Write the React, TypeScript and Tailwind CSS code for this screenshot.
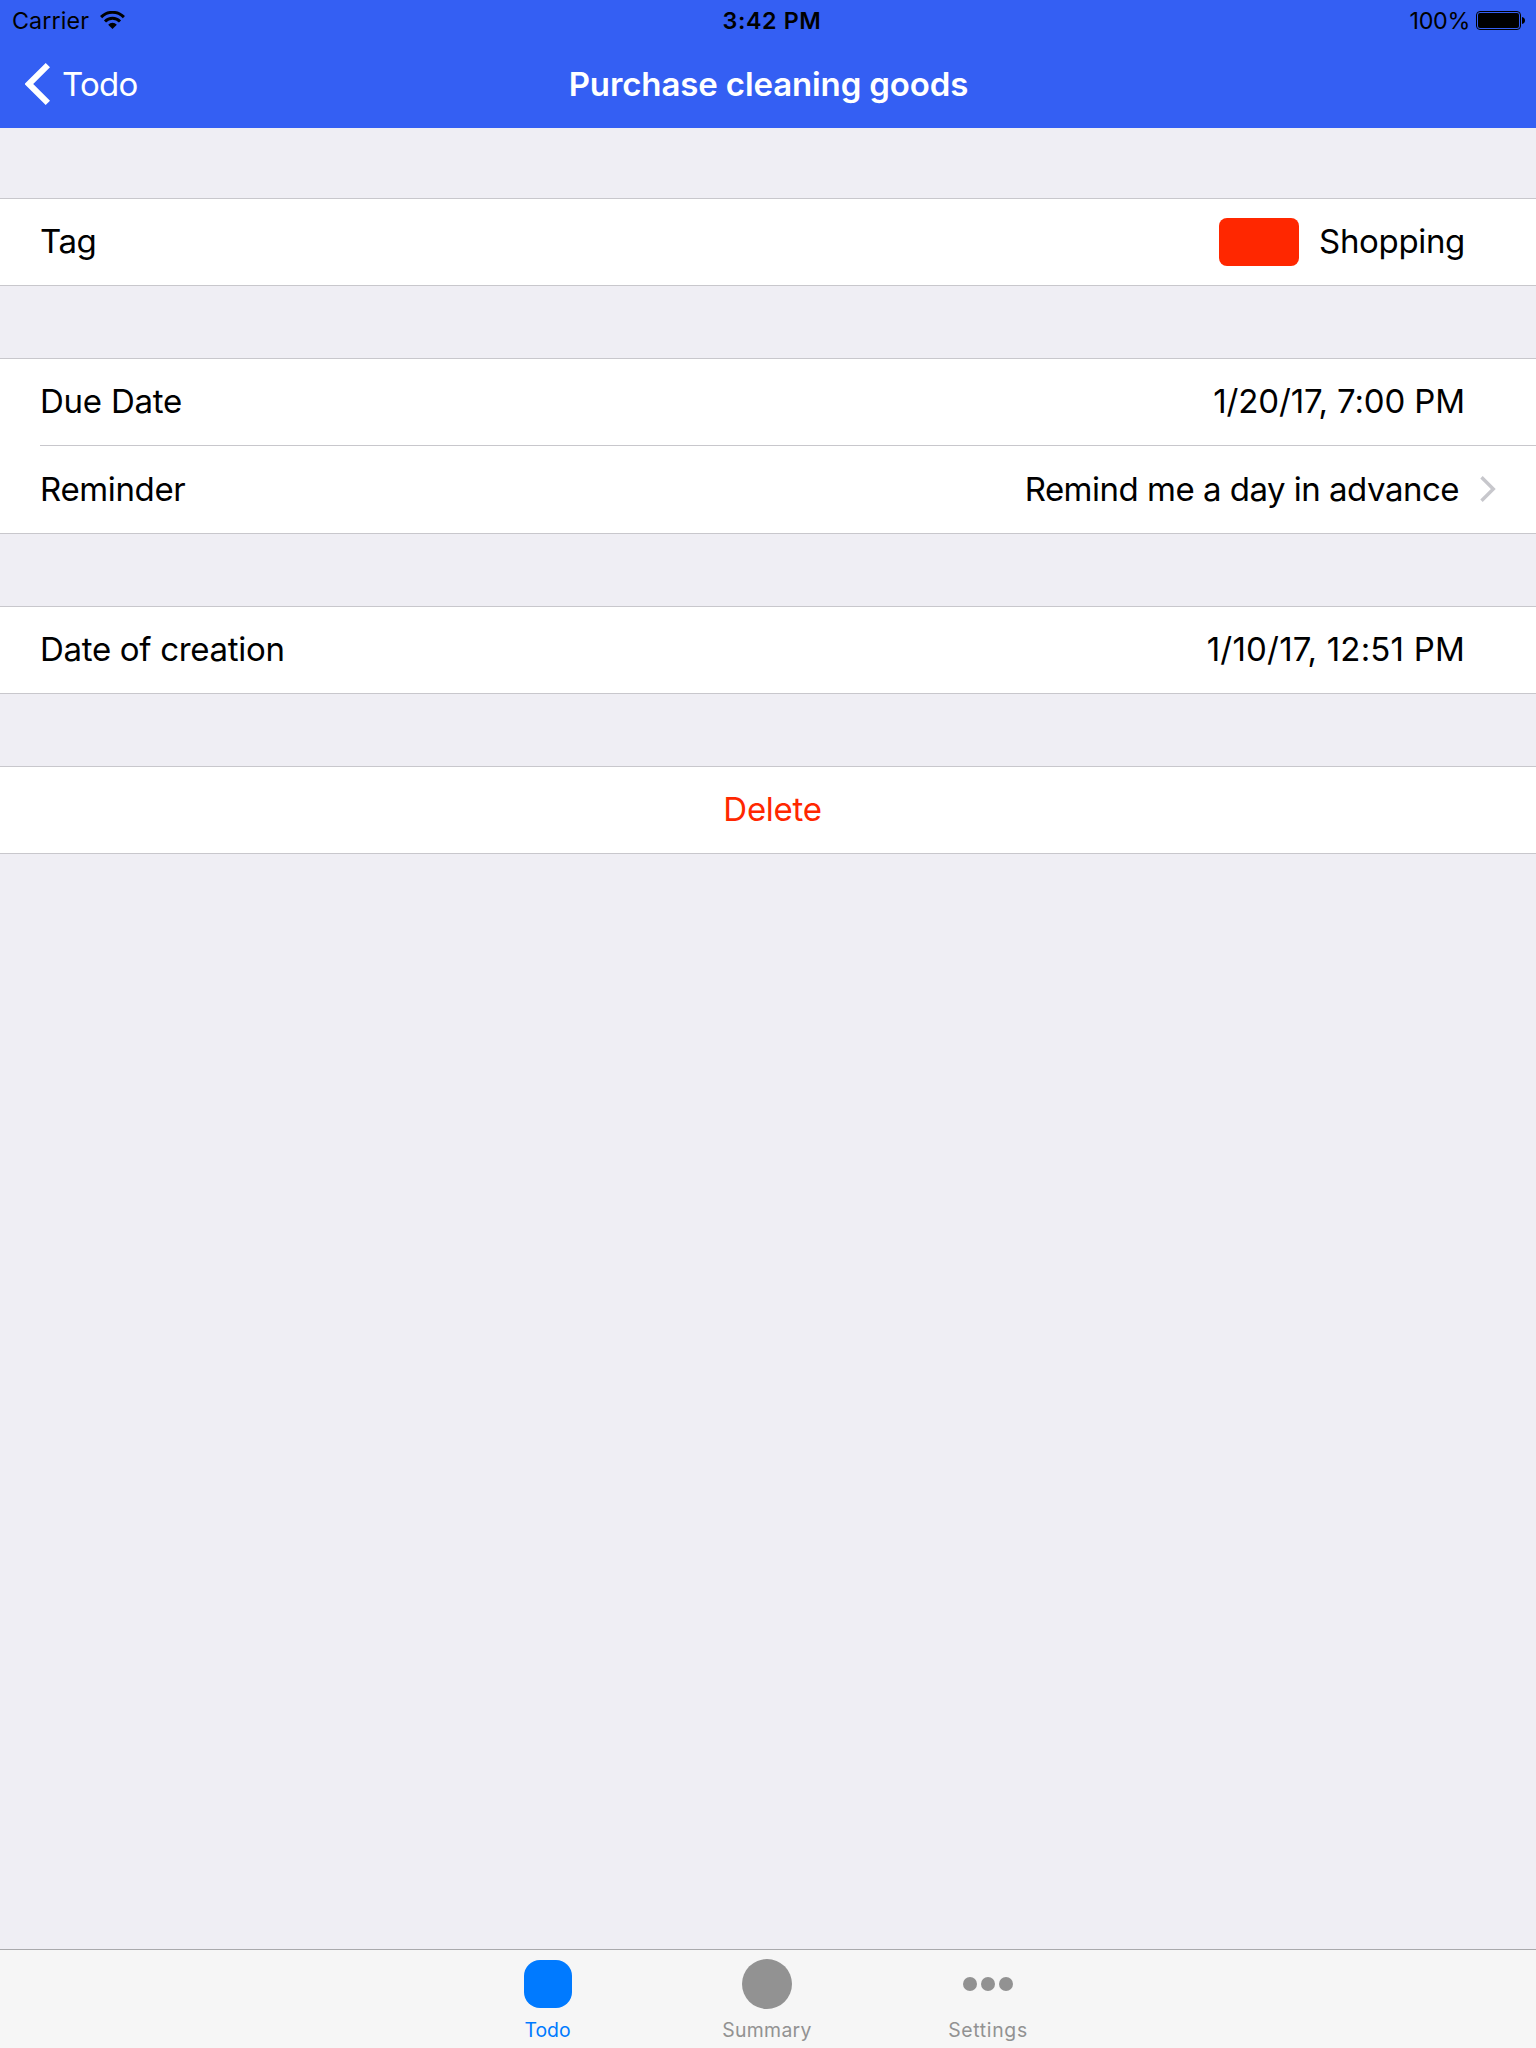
import type { ReactNode } from 'react'

function WifiIcon() {
  return (
    <svg className="ml-[11px] h-[18px] w-[25px]" viewBox="0 0 25 18" fill="none" stroke="#000">
      <path d="M1.1 6.1 A16 16 0 0 1 23.9 6.1" strokeWidth="3" />
      <path d="M5 10.4 A10.4 10.4 0 0 1 20 10.4" strokeWidth="2.9" />
      <path d="M12.5 18 L8.2 13.7 A5.8 5.8 0 0 1 16.8 13.7 Z" fill="#000" stroke="none" />
    </svg>
  )
}

function BatteryIcon() {
  return (
    <svg className="h-[19px] w-[49px]" viewBox="0 0 49 19">
      <rect x="0.5" y="0.5" width="44" height="18" rx="3.5" fill="none" stroke="#000" />
      <rect x="2" y="2" width="41" height="15" rx="2" />
      <path d="M46 6 C50 6.5 50 12.5 46 13 Z" />
    </svg>
  )
}

function Group({ children }: { children: ReactNode }) {
  return <section className="mb-[72px] border-y border-[#c8c7cc] bg-white">{children}</section>
}

function Row({ label, children }: { label: ReactNode; children: ReactNode }) {
  return (
    <div className="flex h-[86px] items-center justify-between pb-[2px]">
      {label}
      {children}
    </div>
  )
}

export default function App() {
  return (
    <div className="flex h-[2048px] w-[1536px] flex-col bg-[#efeef4] font-['Inter',sans-serif] text-[33px] leading-[40px] whitespace-nowrap text-black">
      <header className="h-[128px] shrink-0 bg-[#345ff3]">
        <div className="grid h-[40px] grid-cols-3 pr-[11px] pl-[12px] text-[23.3px] leading-[29px]">
          <div className="flex items-start pt-[6px]">
            <span className="tracking-[0.1px]">Carrier</span>
            <span className="pt-[5px]">
              <WifiIcon />
            </span>
          </div>
          <div className="pt-[6px] pl-[7px] text-center font-semibold tracking-[0.6px]">3:42 PM</div>
          <div className="flex items-start justify-end pt-[6px]">
            <span className="mr-[6px] tracking-[-0.3px]">100%</span>
            <span className="pt-[5px]">
              <BatteryIcon />
            </span>
          </div>
        </div>
        <nav className="grid h-[88px] grid-cols-3 pt-[24px] text-white">
          <div className="flex items-start pl-[25px]">
            <svg className="-mt-px h-[42px] w-[25px]" viewBox="0 0 25 42" fill="#fff">
              <path d="M-0.5 21 L20.7 0 L25 4.2 L8.2 21 L25 37.8 L20.7 42 Z" />
            </svg>
            <span className="ml-[12px] tracking-[-0.7px]">Todo</span>
          </div>
          <h1 className="pl-px text-center font-semibold tracking-[-0.12px]">Purchase cleaning goods</h1>
        </nav>
      </header>

      <main className="grow pt-[70px]">
        <Group>
          <Row label={<span className="pl-[40px] tracking-[-0.46px]">Tag</span>}>
            <div className="flex items-center pr-[71px]">
              <span className="relative top-px mr-[20px] h-[48px] w-[80px] rounded-[8px] bg-[#ff2700]" />
              <span className="tracking-[-0.34px]">Shopping</span>
            </div>
          </Row>
        </Group>

        <Group>
          <Row label={<span className="pl-[40px] tracking-[-0.24px]">Due Date</span>}>
            <span className="pr-[71px] tracking-[-0.12px]">1/20/17, 7:00 PM</span>
          </Row>
          <div className="ml-[40px] h-px bg-[#c8c7cc]" />
          <div className="flex h-[87px] items-center justify-between pb-[2px]">
            <span className="pl-[40px] tracking-[-0.36px]">Reminder</span>
            <div className="flex items-center pr-[40px]">
              <span className="tracking-[-0.5px]">Remind me a day in advance</span>
              <svg className="ml-[21px] h-[26px] w-[16px]" viewBox="0 0 16 26" fill="none" stroke="#c7c7cc" strokeWidth="3.4">
                <path d="M1.5 1.3 L13.3 13 L1.5 24.7" />
              </svg>
            </div>
          </div>
        </Group>

        <Group>
          <Row label={<span className="pl-[40px] tracking-[-0.3px]">Date of creation</span>}>
            <span className="pr-[71px] tracking-[0.2px]">1/10/17, 12:51 PM</span>
          </Row>
        </Group>

        <Group>
          <button className="flex h-[86px] w-full items-center justify-center pb-[2px] pl-[9px] tracking-[-0.29px] text-[#ff2700]">Delete</button>
        </Group>
      </main>

      <footer className="flex h-[99px] shrink-0 justify-center gap-[68px] border-t border-[#a9a9ac] bg-[#f6f6f6] pr-px text-[19.4px] leading-[24px] text-[#929292]">
        <div className="flex w-[152px] flex-col items-center pt-[10px] text-[#007aff]">
          <span className="h-[48px] w-[48px] rounded-[16px] bg-[#007aff]" />
          <span className="mt-[10px]">Todo</span>
        </div>
        <div className="flex w-[152px] flex-col items-center pt-[9px]">
          <span className="mr-[2px] h-[50px] w-[50px] rounded-full bg-[#929292]" />
          <span className="mt-[9px] mr-px tracking-[0.3px]">Summary</span>
        </div>
        <div className="flex w-[152px] flex-col items-center pt-[10px]">
          <span className="flex h-[48px] items-center gap-[4px]">
            <span className="h-[14px] w-[14px] rounded-full bg-[#929292]" />
            <span className="h-[14px] w-[14px] rounded-full bg-[#929292]" />
            <span className="h-[14px] w-[14px] rounded-full bg-[#929292]" />
          </span>
          <span className="mt-[10px] ml-px tracking-[0.68px]">Settings</span>
        </div>
      </footer>
    </div>
  )
}
